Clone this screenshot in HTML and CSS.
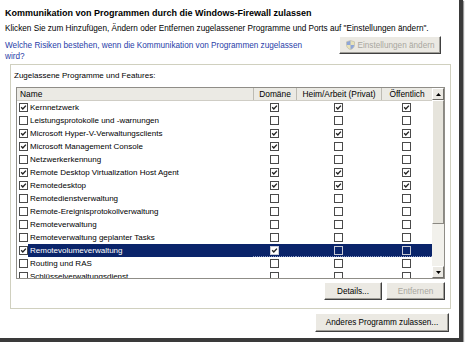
FILE: index.html
```html
<!DOCTYPE html>
<html>
<head>
  <title>Windows-Firewall</title>
  <link rel="stylesheet" href="styles.css">
</head>
<body>
  <div class="frame">
    <div class="page">
      <h1 class="title">Kommunikation von Programmen durch die Windows-Firewall zulassen</h1>
      <p class="intro">Klicken Sie zum Hinzufügen, Ändern oder Entfernen zugelassener Programme und Ports auf "Einstellungen ändern".</p>

      <div class="risk">
        <a class="link" href="#">Welche Risiken bestehen, wenn die Kommunikation von Programmen zugelassen wird?</a>
        <button class="btn btn-settings" disabled>
          <svg class="shield" width="9" height="10" viewBox="0 0 9 10">
            <path d="M4.5 0.5 L8.5 1.8 L8.5 5 C8.5 7.5 6.5 9 4.5 9.6 C2.5 9 0.5 7.5 0.5 5 L0.5 1.8 Z" fill="#e9e3b8" stroke="#b9b6a8" stroke-width="0.6"/>
            <path d="M4.5 0.8 L4.5 5 L0.8 5 L0.8 2 Z" fill="#8fa6d8"/>
            <path d="M4.5 5 L8.2 5 C8.1 7.3 6.3 8.8 4.5 9.3 Z" fill="#8fa6d8"/>
          </svg>
          Einstellungen ändern
        </button>
      </div>

      <div class="group">
        <div class="group-label">Zugelassene Programme und Features:</div>
        <div class="listview">
          <div class="table">
            <div class="row header">
              <div class="cell name">Name</div>
              <div class="cell">Domäne</div>
              <div class="cell">Heim/Arbeit (Privat)</div>
              <div class="cell">Öffentlich</div>
            </div>

            <div class="row">
              <div class="cell name"><span class="cb on"></span><span class="label">Kernnetzwerk</span></div>
              <div class="cell"><span class="cb on"></span></div>
              <div class="cell"><span class="cb on"></span></div>
              <div class="cell"><span class="cb on"></span></div>
            </div>
            <div class="row">
              <div class="cell name"><span class="cb"></span><span class="label">Leistungsprotokolle und -warnungen</span></div>
              <div class="cell"><span class="cb"></span></div>
              <div class="cell"><span class="cb"></span></div>
              <div class="cell"><span class="cb"></span></div>
            </div>
            <div class="row">
              <div class="cell name"><span class="cb on"></span><span class="label">Microsoft Hyper-V-Verwaltungsclients</span></div>
              <div class="cell"><span class="cb on"></span></div>
              <div class="cell"><span class="cb on"></span></div>
              <div class="cell"><span class="cb on"></span></div>
            </div>
            <div class="row">
              <div class="cell name"><span class="cb on"></span><span class="label">Microsoft Management Console</span></div>
              <div class="cell"><span class="cb on"></span></div>
              <div class="cell"><span class="cb"></span></div>
              <div class="cell"><span class="cb"></span></div>
            </div>
            <div class="row">
              <div class="cell name"><span class="cb"></span><span class="label">Netzwerkerkennung</span></div>
              <div class="cell"><span class="cb"></span></div>
              <div class="cell"><span class="cb"></span></div>
              <div class="cell"><span class="cb"></span></div>
            </div>
            <div class="row">
              <div class="cell name"><span class="cb on"></span><span class="label">Remote Desktop Virtualization Host Agent</span></div>
              <div class="cell"><span class="cb on"></span></div>
              <div class="cell"><span class="cb on"></span></div>
              <div class="cell"><span class="cb on"></span></div>
            </div>
            <div class="row">
              <div class="cell name"><span class="cb on"></span><span class="label">Remotedesktop</span></div>
              <div class="cell"><span class="cb on"></span></div>
              <div class="cell"><span class="cb on"></span></div>
              <div class="cell"><span class="cb on"></span></div>
            </div>
            <div class="row">
              <div class="cell name"><span class="cb"></span><span class="label">Remotedienstverwaltung</span></div>
              <div class="cell"><span class="cb"></span></div>
              <div class="cell"><span class="cb"></span></div>
              <div class="cell"><span class="cb"></span></div>
            </div>
            <div class="row">
              <div class="cell name"><span class="cb"></span><span class="label">Remote-Ereignisprotokollverwaltung</span></div>
              <div class="cell"><span class="cb"></span></div>
              <div class="cell"><span class="cb"></span></div>
              <div class="cell"><span class="cb"></span></div>
            </div>
            <div class="row">
              <div class="cell name"><span class="cb"></span><span class="label">Remoteverwaltung</span></div>
              <div class="cell"><span class="cb"></span></div>
              <div class="cell"><span class="cb"></span></div>
              <div class="cell"><span class="cb"></span></div>
            </div>
            <div class="row">
              <div class="cell name"><span class="cb"></span><span class="label">Remoteverwaltung geplanter Tasks</span></div>
              <div class="cell"><span class="cb"></span></div>
              <div class="cell"><span class="cb"></span></div>
              <div class="cell"><span class="cb"></span></div>
            </div>
            <div class="row selected">
              <div class="cell name"><span class="cb on"></span><span class="label">Remotevolumeverwaltung</span></div>
              <div class="cell"><span class="cb on"></span></div>
              <div class="cell"><span class="cb"></span></div>
              <div class="cell"><span class="cb"></span></div>
            </div>
            <div class="row">
              <div class="cell name"><span class="cb"></span><span class="label">Routing und RAS</span></div>
              <div class="cell"><span class="cb"></span></div>
              <div class="cell"><span class="cb"></span></div>
              <div class="cell"><span class="cb"></span></div>
            </div>
            <div class="row">
              <div class="cell name"><span class="cb"></span><span class="label">Schlüsselverwaltungsdienst</span></div>
              <div class="cell"><span class="cb"></span></div>
              <div class="cell"><span class="cb"></span></div>
              <div class="cell"><span class="cb"></span></div>
            </div>
          </div>

          <div class="vscroll">
            <div class="arrow"><svg width="5" height="3" viewBox="0 0 5 3"><path d="M0 3 L2.5 0 L5 3 Z" fill="#000"/></svg></div>
            <div class="thumb"></div>
            <div class="track"></div>
            <div class="arrow"><svg width="5" height="3" viewBox="0 0 5 3"><path d="M0 0 L5 0 L2.5 3 Z" fill="#000"/></svg></div>
          </div>
        </div>

        <div class="group-buttons">
          <button class="btn btn-details">Details...</button>
          <button class="btn btn-remove" disabled>Entfernen</button>
        </div>
      </div>

      <div class="bottom-buttons">
        <button class="btn btn-add">Anderes Programm zulassen...</button>
      </div>
    </div>
  </div>
</body>
</html>
```

FILE: styles.css
```css
/* Fenster */
body {
  margin: 0;
  background: #fff;
  font-family: "Liberation Sans", Arial, sans-serif;
  font-size: 8.2px;
  color: #000;
}

.frame {
  width: 459px;
  height: 338px;
  border-right: 4px solid #3a3a3a;
  border-bottom: 4px solid #3a3a3a;
  box-shadow: 1px 1px 1px #9a9a9a;
}

.page {
  padding: 7px 0 0 5px;
}

.title {
  margin: 0;
  font-size: 9px;
  line-height: 12px;
  font-weight: bold;
}

.intro {
  margin: 4px 0 0 0;
  line-height: 12px;
}

.risk {
  display: flex;
  justify-content: space-between;
  align-items: flex-start;
  margin-top: 1px;
  height: 26px;
}

.link {
  width: 310px;
  padding-top: 4px;
  line-height: 11px;
  color: #2940a8;
  text-decoration: none;
}

/* Schaltflächen */
.btn {
  font-family: inherit;
  font-size: 8.2px;
  height: 18px;
  padding: 0;
  background: #ebe9e3;
  color: #000;
  border: 1px solid;
  border-color: #fff #404040 #404040 #fff;
  box-shadow: inset -1px -1px 0 #a09e98;
  display: flex;
  align-items: center;
  justify-content: center;
}

.btn[disabled] {
  color: #a9a79f;
}

.btn-settings {
  width: 102px;
  margin-right: 18px;
  gap: 3px;
}

.shield {
  display: block;
}

/* Gruppe */
.group {
  margin: 2px 0 0 5px;
  width: 441px;
  box-sizing: border-box;
  border: 1px solid #d0d0bf;
  padding: 5px 5px 8px 5px;
}

.group-label {
  margin-left: -2px;
  line-height: 12px;
  font-size: 8px;
}

.listview {
  margin-top: 5px;
  height: 192px;
  box-sizing: border-box;
  border: 1px solid #8f8d87;
  display: flex;
  overflow: hidden;
}

.table {
  flex: 1;
  overflow: hidden;
}

.row {
  display: grid;
  grid-template-columns: 236px 43px 85px 51px;
  height: 13px;
}

.cell {
  display: flex;
  align-items: center;
  justify-content: center;
  white-space: nowrap;
}

.cell.name {
  justify-content: flex-start;
  padding-left: 2px;
}

.label {
  flex: 1;
  align-self: stretch;
  display: flex;
  align-items: center;
  padding-left: 2px;
  font-size: 8px;
}

.header {
  background: #ebeae4;
  border-bottom: 1px solid #cfcdc5;
  height: 12px;
  font-size: 8.4px;
}

.header .cell {
  border-left: 1px solid #bdbbb3;
}

.header .cell.name {
  border-left: none;
  padding-left: 3px;
}

.cb {
  width: 7px;
  height: 7px;
  border: 1px solid #4a4a4a;
  background: #fff;
  flex: none;
}

.cb.on {
  background: #fff url("data:image/svg+xml;utf8,<svg xmlns='http://www.w3.org/2000/svg' width='7' height='7' viewBox='0 0 7 7'><path d='M1.2 3.3 L2.8 5 L5.9 1.6' fill='none' stroke='%23222' stroke-width='1.4'/></svg>") no-repeat center;
}

.selected .label,
.selected .cell:not(.name) {
  background: #0a246a;
  color: #fff;
}

.selected .cell:not(.name) {
  border-bottom: 1px dotted #8e9bc4;
}

.selected .cell:not(.name) .cb {
  border-color: #c9cbd6;
  background-color: transparent;
}

.selected .cell:not(.name) .cb.on {
  background-color: #fff;
}

/* Bildlaufleiste */
.vscroll {
  width: 12px;
  display: flex;
  flex-direction: column;
  background: #f2f1ec;
}

.arrow {
  height: 12px;
  box-sizing: border-box;
  background: #ebe9e3;
  border: 1px solid;
  border-color: #fff #6f6d68 #6f6d68 #fff;
  display: flex;
  align-items: center;
  justify-content: center;
}

.arrow svg {
  display: block;
}

.thumb {
  height: 124px;
  box-sizing: border-box;
  background: #e6e4dc;
  border: 1px solid;
  border-color: #fff #8a8882 #8a8882 #fff;
}

.track {
  flex: 1;
}

.group-buttons {
  display: flex;
  justify-content: flex-end;
  gap: 4px;
  margin-top: 3px;
}

.btn-details {
  width: 58px;
}

.btn-remove {
  width: 59px;
}

.bottom-buttons {
  display: flex;
  justify-content: flex-end;
  margin-top: 4px;
  width: 444px;
}

.btn-add {
  width: 134px;
  height: 19px;
}
```
